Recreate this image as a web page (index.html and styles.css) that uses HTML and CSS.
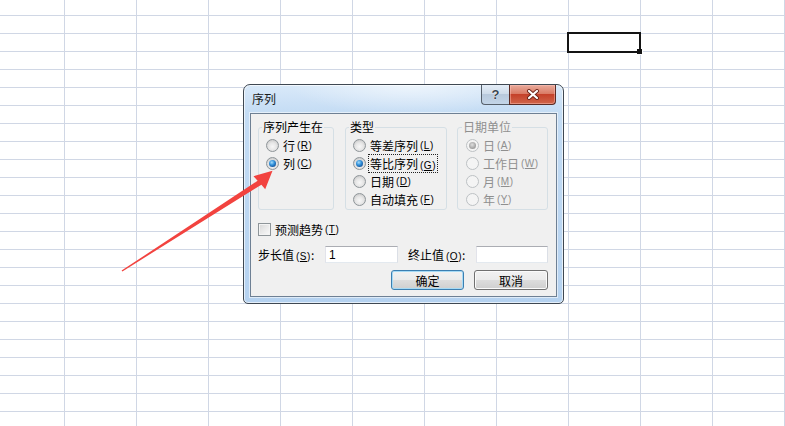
FILE: index.html
```html
<!DOCTYPE html>
<html lang="zh-CN">
<head>
    <meta charset="UTF-8">
    <title>序列</title>
    <link rel="stylesheet" href="styles.css">
</head>
<body>
    <div class="sheet">
        <div class="cell-select"><span class="fill-handle"></span></div>

        <div class="dialog">
            <div class="titlebar">
                <span class="title">序列</span>
                <div class="caption-btns">
                    <span class="cbtn help">?</span>
                    <span class="cbtn close">
                        <svg width="14" height="11" viewBox="0 0 14 11">
                            <path d="M3 2 L11 9 M11 2 L3 9" stroke="#6b2318" stroke-width="4" stroke-linecap="round"/>
                            <path d="M3 2 L11 9 M11 2 L3 9" stroke="#fff" stroke-width="2.2" stroke-linecap="round"/>
                        </svg>
                    </span>
                </div>
            </div>

            <div class="dlg-body">
                <div class="groups">
                    <fieldset class="grp grp-series">
                        <legend>序列产生在</legend>
                        <label class="opt"><span class="radio"></span>行<span class="acc">(<u>R</u>)</span></label>
                        <label class="opt"><span class="radio on"></span>列<span class="acc">(<u>C</u>)</span></label>
                    </fieldset>
                    <fieldset class="grp grp-type">
                        <legend>类型</legend>
                        <label class="opt"><span class="radio"></span>等差序列<span class="acc">(<u>L</u>)</span></label>
                        <label class="opt"><span class="radio on"></span><span class="focus">等比序列<span class="acc">(<u>G</u>)</span></span></label>
                        <label class="opt"><span class="radio"></span>日期<span class="acc">(<u>D</u>)</span></label>
                        <label class="opt"><span class="radio"></span>自动填充<span class="acc">(<u>F</u>)</span></label>
                    </fieldset>
                    <fieldset class="grp grp-date disabled">
                        <legend>日期单位</legend>
                        <label class="opt"><span class="radio on"></span>日<span class="acc">(<u>A</u>)</span></label>
                        <label class="opt"><span class="radio"></span>工作日<span class="acc">(<u>W</u>)</span></label>
                        <label class="opt"><span class="radio"></span>月<span class="acc">(<u>M</u>)</span></label>
                        <label class="opt"><span class="radio"></span>年<span class="acc">(<u>Y</u>)</span></label>
                    </fieldset>
                </div>

                <label class="check-row"><span class="checkbox"></span>预测趋势<span class="acc">(<u>T</u>)</span></label>

                <div class="step-row">
                    <label class="step-label">步长值<span class="acc">(<u>S</u>)</span>:</label>
                    <input class="txt txt-step" type="text" value="1">
                    <label class="stop-label">终止值<span class="acc">(<u>O</u>)</span>:</label>
                    <input class="txt txt-stop" type="text" value="">
                </div>

                <div class="btn-row">
                    <button class="btn btn-default">确定</button>
                    <button class="btn">取消</button>
                </div>
            </div>
        </div>

        <svg class="arrow" width="785" height="426" viewBox="0 0 785 426">
            <polygon fill="#f2433f" points="121.6,270.6 257.6,180.8 253.5,176.2 272.5,170.8 265.2,189.2 261.4,184.7 122.4,271.4"/>
        </svg>
    </div>
</body>
</html>
```

FILE: styles.css
```css
html, body {
    margin: 0;
    height: 100%;
}

body {
    overflow: hidden;
    font-family: "Noto Sans CJK SC", "Liberation Sans", sans-serif;
    font-size: 12px;
    color: #000;
}

/* spreadsheet grid */
.sheet {
    position: relative;
    width: 785px;
    height: 426px;
    background-color: #fff;
    background-image:
        linear-gradient(to right, #d0d7e5 1px, transparent 1px),
        linear-gradient(to bottom, #d0d7e5 1px, transparent 1px);
    background-size: 72px 18px;
    background-position: 64px 15px;
}

.cell-select {
    position: absolute;
    left: 567px;
    top: 32px;
    width: 74px;
    height: 21px;
    box-sizing: border-box;
    border: 2px solid #141414;
}

.fill-handle {
    position: absolute;
    right: -4px;
    bottom: -4px;
    width: 5px;
    height: 5px;
    background: #141414;
    border: 1px solid #fff;
    border-top: none;
    border-left: none;
}

/* dialog window */
.dialog {
    position: absolute;
    left: 243px;
    top: 84px;
    width: 321px;
    box-sizing: border-box;
    padding: 0 6px 6px;
    border: 1px solid #3f4852;
    border-radius: 7px 7px 5px 5px;
    background:
        radial-gradient(ellipse 120px 30px at 52% 0, rgba(255, 255, 255, 0.55), transparent),
        linear-gradient(180deg, #d9e9f9 0, #c4dcf4 28px, #b5d2f0 100%);
    box-shadow: inset 0 0 0 1px rgba(255, 255, 255, 0.65);
}

.titlebar {
    height: 28px;
    display: flex;
    justify-content: space-between;
}

.title {
    margin-left: 2px;
    line-height: 28px;
    font-size: 12px;
    color: #1b1b1b;
}

.caption-btns {
    display: flex;
    margin-right: 1px;
    height: 20px;
}

.cbtn {
    display: flex;
    align-items: center;
    justify-content: center;
    box-sizing: border-box;
    height: 20px;
    border: 1px solid #56606b;
    border-top: none;
}

.help {
    width: 28px;
    border-right: none;
    border-radius: 0 0 0 4px;
    background: linear-gradient(180deg, #e4edf7 0, #cfdcea 45%, #b8c9dc 50%, #c3d5e8 100%);
    font-family: "Liberation Sans", sans-serif;
    font-weight: bold;
    font-size: 13px;
    color: #3b4651;
    text-shadow: 0 0 1px #fff, 0 0 1px #fff;
}

.close {
    width: 47px;
    border-color: #5b2b24;
    border-radius: 0 0 4px 0;
    background: linear-gradient(180deg, #e9ab9c 0, #da7c66 45%, #c5412a 50%, #d0654a 100%);
    box-shadow: inset 0 0 0 1px rgba(255, 200, 190, 0.45);
}

.dlg-body {
    border: 1px solid #6e8094;
    background: #f0f0f0;
    padding: 6px 8px 6px 7px;
    box-shadow: 0 0 0 1px rgba(255, 255, 255, 0.55);
}

/* group boxes */
.groups {
    display: flex;
    gap: 11px;
    height: 90px;
}

.grp {
    margin: 0;
    padding: 2px 0 1px 7px;
    border: 1px solid #d5dfe5;
    border-radius: 3px;
    box-sizing: border-box;
    min-width: 0;
}

.grp legend {
    padding: 0 1px;
    margin-left: -4px;
    line-height: 14px;
    height: 14px;
}

.grp-series { width: 76px; }
.grp-type { width: 102px; }
.grp-date { width: 91px; margin-left: -1px; padding-left: 8px; }

.opt {
    display: flex;
    align-items: center;
    height: 18px;
    white-space: nowrap;
}

.radio {
    position: relative;
    width: 13px;
    height: 13px;
    box-sizing: border-box;
    margin-right: 4px;
    border: 1px solid #8e9599;
    border-radius: 50%;
    background: radial-gradient(circle at 50% 60%, #f7f7f7 0, #e6e6e6 45%, #cfcfcf 75%, #f2f2f2 100%);
}

.radio.on::after {
    content: "";
    position: absolute;
    left: 2px;
    top: 2px;
    width: 7px;
    height: 7px;
    border-radius: 50%;
    background: radial-gradient(circle at 40% 35%, #a6dcfa 0, #3393dc 40%, #0c3f84 90%);
}

.acc {
    margin-left: 2px;
    font-family: "Liberation Sans", sans-serif;
    font-size: 10px;
    letter-spacing: 0.5px;
}

.acc u {
    text-underline-offset: 1px;
}

.focus {
    outline: 1px dotted #222;
    outline-offset: 0;
    padding: 0 1px;
    margin-left: -1px;
}

.disabled {
    color: #8f8f8f;
}

.disabled .radio {
    border-color: #bdc1c4;
    background: #f4f4f4;
}

.disabled .radio.on::after {
    background: radial-gradient(circle at 45% 40%, #e0e0e0 0, #a5a5a5 60%, #8c8c8c 100%);
}

/* checkbox row */
.check-row {
    display: flex;
    align-items: center;
    height: 18px;
    margin-top: 10px;
    margin-left: 0;
}

.checkbox {
    width: 13px;
    height: 13px;
    box-sizing: border-box;
    margin-right: 4px;
    border: 1px solid #8e9599;
    background: linear-gradient(135deg, #d6d6d6 0, #eaeaea 50%, #fafafa 100%);
    box-shadow: inset 0 0 0 1px #f4f4f4;
}

/* step / stop values */
.step-row {
    display: flex;
    align-items: center;
    height: 17px;
    margin-top: 8px;
}

.step-label { width: 68px; }

.stop-label {
    width: 69px;
    margin-left: 10px;
}

.txt {
    height: 17px;
    box-sizing: border-box;
    padding: 0 3px;
    border: 1px solid;
    border-color: #abadb3 #dbdfe6 #e3e9ef #e2e3ea;
    background: #fff;
    font-family: "Liberation Sans", sans-serif;
    font-size: 12px;
    outline: none;
}

.txt-step { width: 73px; }
.txt-stop { width: 72px; }

/* buttons */
.btn-row {
    display: flex;
    justify-content: flex-end;
    gap: 10px;
    margin-top: 7px;
}

.btn {
    width: 74px;
    height: 20px;
    padding: 0;
    border: 1px solid #707070;
    border-radius: 3px;
    background: linear-gradient(180deg, #f2f2f2 0, #ebebeb 50%, #dddddd 50%, #cfcfcf 100%);
    box-shadow: inset 0 0 0 1px #fbfbfb;
    font-family: "Noto Sans CJK SC", sans-serif;
    font-size: 12px;
    color: #000;
}

.btn-default {
    width: 73px;
    border-color: #3c7fb1;
    box-shadow: inset 0 0 0 1px #a6daf5;
}

.arrow {
    position: absolute;
    left: 0;
    top: 0;
    pointer-events: none;
}
```
